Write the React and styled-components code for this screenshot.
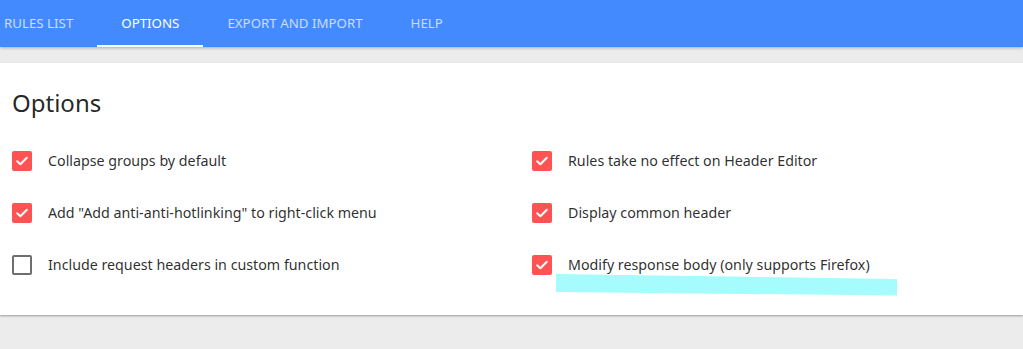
import React from "react";
import styled, { createGlobalStyle } from "styled-components";

const Global = createGlobalStyle`
  html, body { margin: 0; padding: 0; background: #ececec; overflow: hidden; }
  body { font-family: "Noto Sans", "Open Sans", sans-serif; }
  * { box-sizing: border-box; }
`;

const Page = styled.div`
  width: 1023px;
  height: 349px;
  background: #ececec;
  display: flex;
  flex-direction: column;
`;

const Header = styled.header`
  height: 47px;
  background: #448aff;
  box-shadow: 0 1px 3px rgba(0, 0, 0, 0.28);
  display: flex;
  align-items: stretch;
  position: relative;
  z-index: 2;
`;

const Tabs = styled.nav`
  display: flex;
  margin-left: -20px;
`;

const Tab = styled.div`
  position: relative;
  padding: 0 24px 2px;
  display: flex;
  align-items: center;
  font-size: 13.3px;
  text-transform: uppercase;
  color: ${(p) => (p.$active ? "#ffffff" : "rgba(255,255,255,0.72)")};
  &::after {
    content: "";
    display: ${(p) => (p.$active ? "block" : "none")};
    position: absolute;
    left: 0;
    right: 0;
    bottom: 0;
    height: 2px;
    background: #ffffff;
  }
`;

const Card = styled.section`
  margin-top: 16px;
  background: #ffffff;
  padding: 24px 0 24px 12px;
  box-shadow: 0 1px 2px rgba(0, 0, 0, 0.35);
  position: relative;
`;

const Title = styled.h1`
  margin: 0 0 16px;
  font-size: 24px;
  line-height: 32px;
  font-weight: 400;
  color: rgba(0, 0, 0, 0.87);
`;

const Grid = styled.div`
  display: grid;
  grid-template-columns: 520px 1fr;
  grid-auto-flow: column;
  grid-template-rows: repeat(3, 52px);
`;

const Row = styled.label`
  display: flex;
  align-items: center;
  gap: 16px;
  font-size: 14.25px;
  color: rgba(0, 0, 0, 0.84);
`;

const Label = styled.span`
  padding-bottom: 2px;
`;

const Box = styled.span`
  width: 20px;
  height: 20px;
  border-radius: 2px;
  flex: none;
  display: flex;
  align-items: center;
  justify-content: center;
  background: ${(p) => (p.$checked ? "#ff5252" : "transparent")};
  border: ${(p) => (p.$checked ? "none" : "2px solid #6e6e6e")};
`;

const Highlight = styled.svg`
  position: absolute;
  left: 556px;
  top: 211px;
  pointer-events: none;
`;

const Check = () => (
  <svg width="14" height="14" viewBox="0 0 14 14">
    <path d="M2.2 7.2 L5.4 10.2 L11.8 3.8" fill="none" stroke="#fff" strokeWidth="2" strokeLinecap="round" strokeLinejoin="round" />
  </svg>
);

const Option = ({ checked, children }) => (
  <Row>
    <Box $checked={checked}>{checked && <Check />}</Box>
    <Label>{children}</Label>
  </Row>
);

export default function App() {
  return (
    <Page>
      <Global />
      <Header>
        <Tabs>
          <Tab>Rules list</Tab>
          <Tab $active>Options</Tab>
          <Tab>Export and import</Tab>
          <Tab>Help</Tab>
        </Tabs>
      </Header>
      <Card>
        <Title>Options</Title>
        <Grid>
          <Option checked>Collapse groups by default</Option>
          <Option checked>Add "Add anti-anti-hotlinking" to right-click menu</Option>
          <Option>Include request headers in custom function</Option>
          <Option checked>Rules take no effect on Header Editor</Option>
          <Option checked>Display common header</Option>
          <Option checked>Modify response body (only supports Firefox)</Option>
        </Grid>
        <Highlight width="342" height="23" viewBox="0 0 342 23">
          <path d="M0 0 L341 5 L341 21.5 L0 18 Z" fill="#a6fcfc" />
        </Highlight>
      </Card>
    </Page>
  );
}
